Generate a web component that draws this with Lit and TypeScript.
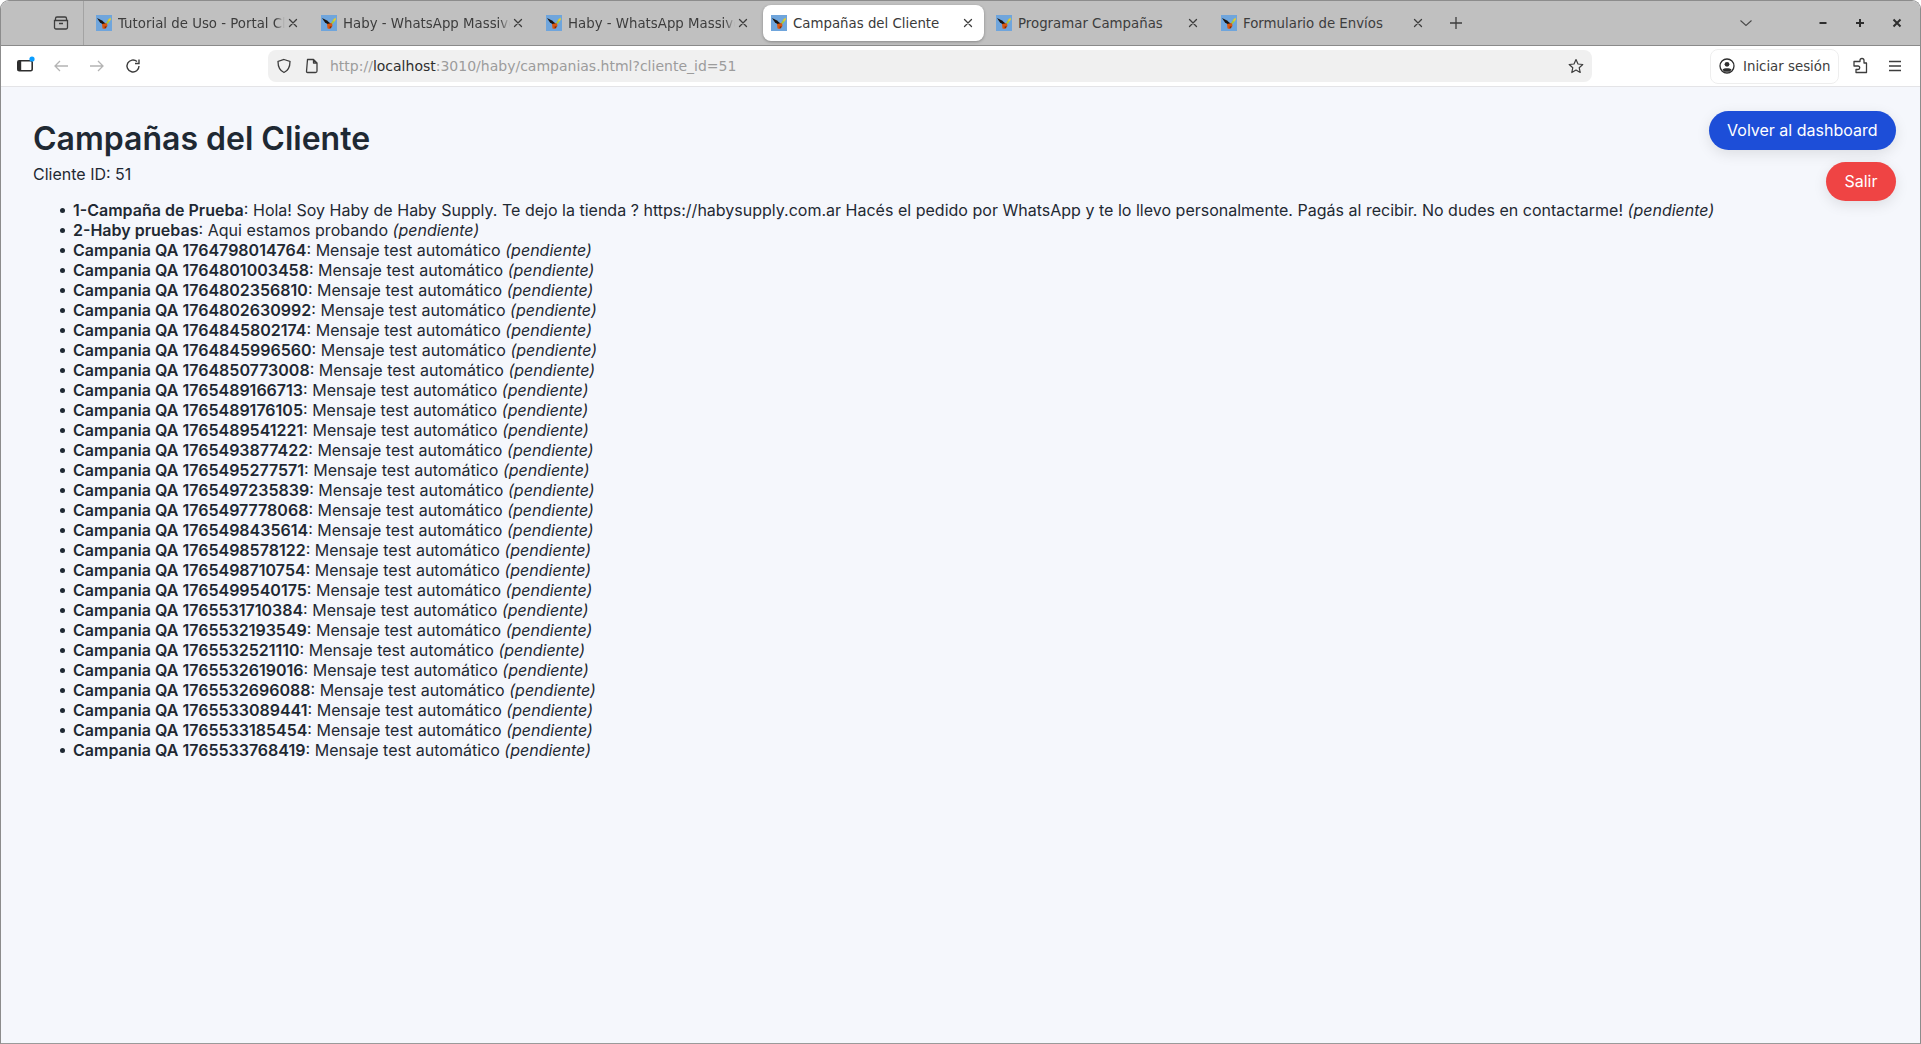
import { LitElement, html, css, svg } from "lit";
import { customElement } from "lit/decorators.js";

const QA = [
  "1764798014764","1764801003458","1764802356810","1764802630992","1764845802174","1764845996560","1764850773008",
  "1765489166713","1765489176105","1765489541221","1765493877422","1765495277571","1765497235839","1765497778068",
  "1765498435614","1765498578122","1765498710754","1765499540175","1765531710384","1765532193549","1765532521110",
  "1765532619016","1765532696088","1765533089441","1765533185454","1765533768419",
];
const ITEMS = [
  { n: "1-Campaña de Prueba", m: "Hola! Soy Haby de Haby Supply. Te dejo la tienda ? https://habysupply.com.ar Hacés el pedido por WhatsApp y te lo llevo personalmente. Pagás al recibir. No dudes en contactarme!" },
  { n: "2-Haby pruebas", m: "Aqui estamos probando" },
  ...QA.map((q) => ({ n: "Campania QA " + q, m: "Mensaje test automático" })),
];
const TABS = [
  { t: "Tutorial de Uso - Portal Cliente", fade: true },
  { t: "Haby - WhatsApp Massive", fade: true },
  { t: "Haby - WhatsApp Massive", fade: true },
  { t: "Campañas del Cliente", active: true },
  { t: "Programar Campañas" },
  { t: "Formulario de Envíos" },
];

const favicon = html`<svg class="fav" viewBox="0 0 16 16" width="16" height="16">
  <rect width="16" height="16" fill="#6fa5dc"/>
  <path d="M1 3 L6 5.5 L10 9 L8 10 L4 7.5Z" fill="#1b1410"/>
  <path d="M6 9 L11 8 L11.5 11 L9 14 L6.5 13.5Z" fill="#d9570f"/>
  <path d="M8 12 L10.5 11 L10 13.5Z" fill="#7a2b08"/>
  <path d="M10 8 L13 3.5 L14 5 L12 9Z" fill="#a8c63a"/>
  <path d="M12 5 L14.5 2.5 L15 4.5 L13 7Z" fill="#e2c93a"/>
</svg>`;
const ic = (w: number, body: unknown) => html`<svg class="ic" viewBox="0 0 16 16" width=${w} height=${w}>${body}</svg>`;
const closeX = ic(16, svg`<path d="M4.5 4.5 L11.5 11.5 M11.5 4.5 L4.5 11.5" stroke="#3d3d3d" stroke-width="1.3" stroke-linecap="round"/>`);

@customElement("app-root")
export class AppRoot extends LitElement {
  static styles = css`
    :host { display: flex; flex-direction: column; height: 100vh; box-sizing: border-box; background: #f5f7fc;
      border: 1px solid #8c8c8c; border-bottom-color: #9a9a9a; border-radius: 9px 9px 0 0; overflow: hidden; }
    .ic { display: block; flex: none; fill: none; overflow: visible; }
    .tabbar { display: flex; align-items: stretch; height: 44px; background: #c0c0c0; border-bottom: 1px solid #8a8a8a; flex: none;
      font: 13.33px "DejaVu Sans", sans-serif; color: #3d3d3d; }
    .view { width: 83px; box-sizing: border-box; flex: none; display: flex; align-items: center; justify-content: flex-end; padding: 0 14px 0 0; border-right: 1px solid #a3a3a3; margin-right: 4px; }
    .tabs { display: flex; gap: 4px; padding-top: 4px; padding-bottom: 4px; }
    .tab { width: 221px; box-sizing: border-box; display: flex; align-items: center; padding: 0 8px; border-radius: 8px; }
    .tab.active { background: #fff; box-shadow: 0 1px 3px rgba(0,0,0,.3); color: #3a3a3a; }
    .fav { display: block; flex: none; margin-right: 6px; }
    .title { flex: 1; min-width: 0; overflow: hidden; white-space: nowrap; }
    .title.fade { -webkit-mask-image: linear-gradient(to right, #000 calc(100% - 10px), transparent 100%); mask-image: linear-gradient(to right, #000 calc(100% - 10px), transparent 100%); }
    .plus { display: flex; margin-left: 4px; align-self: center; padding: 0 10px; }
    .spacer { flex: 1; }
    .winbtns { display: flex; align-items: center; gap: 21px; padding-right: 15px; }
    .chev { margin-right: 40px; }
    .toolbar { display: flex; align-items: center; height: 40px; background: #fff; border-bottom: 1px solid #e4e4e7; flex: none;
      font: 13.33px "DejaVu Sans", sans-serif; color: #3d3d3d; padding-left: 16px; }
    .navs { display: flex; gap: 20px; align-items: center; width: 251px; flex: none; }
    .url { width: 1324px; height: 32px; box-sizing: border-box; background: #f0f0f0; border-radius: 8px; display: flex; align-items: center; padding: 0 8px 0 8px; margin-right: 119px; flex: none; font-size: 14px; }
    .urltext { flex: 1; color: #9c9c9c; margin-left: 10px; white-space: nowrap; }
    .urltext b { font-weight: 400; color: #2e2e2e; }
    .url .page { margin-left: 12px; }
    .sign { width: 129px; height: 35px; box-sizing: border-box; margin-left: -1px; border: 1px solid #eeeeee; border-radius: 8px; display: flex; align-items: center; gap: 8px; padding-left: 8px; flex: none; white-space: nowrap; }
    .ext { margin-left: 13px; }
    .menu { margin-left: 19px; }
    .page-body { flex: 1; min-height: 0; padding: 24px 24px 0 32px; font-family: Inter, sans-serif; font-size: 16px; color: #1f2933; }
    .head { display: flex; justify-content: space-between; align-items: flex-start; }
    h1 { margin: 8px 0 0; font-size: 32px; line-height: 39px; font-weight: 600; color: #1f2933; }
    .cid { margin: 7px 0 0; line-height: 19px; }
    .actions { display: flex; flex-direction: column; align-items: flex-end; gap: 12px; }
    button { height: 39px; border: 0; border-radius: 20px; color: #fff; font: 16px Inter, sans-serif; padding: 0 18.5px 2px; box-shadow: 0 4px 14px rgba(0,0,0,.1); }
    .blue { background: #1d4ed8; }
    .red { background: #ef4444; }
    ul { margin: -1px 0 0; padding: 0 0 0 40px; line-height: 20px; list-style: none; word-spacing: 0.07px; }
    li::before { content: ""; display: inline-block; width: 5px; height: 5px; border-radius: 50%; background: currentColor; margin: 0 8.5px 0 -13.5px; vertical-align: 3px; }
    li b { font-weight: 600; }
  `;
  render() {
    return html`
      <div class="tabbar">
        <div class="view">${ic(16, svg`<path d="M2.5 5.5 V3.5 a1.5 1.5 0 0 1 1.5-1.5 h8 a1.5 1.5 0 0 1 1.5 1.5 V5.5 M1.5 5.5 h13 v7 a1.5 1.5 0 0 1 -1.5 1.5 h-10 a1.5 1.5 0 0 1 -1.5-1.5Z M6 8.5 h4" stroke="#3d3d3d" stroke-width="1.3"/>`)}</div>
        <div class="tabs">
          ${TABS.map((t) => html`<div class="tab ${t.active ? "active" : ""}">${favicon}<span class="title ${t.fade ? "fade" : ""}">${t.t}</span>${closeX}</div>`)}
        </div>
        <div class="plus">${ic(16, svg`<path d="M8 2 V14 M2 8 H14" stroke="#3d3d3d" stroke-width="1.3"/>`)}</div>
        <div class="spacer"></div>
        <div class="winbtns">
          <span class="chev">${ic(16, svg`<path d="M2.5 5.5 L8 10.5 L13.5 5.5" stroke="#4a4a4a" stroke-width="1.1"/>`)}</span>
          ${ic(16, svg`<path d="M4.5 8 H11.5" stroke="#2e2e2e" stroke-width="2"/>`)}
          ${ic(16, svg`<path d="M4 8 H12 M8 4 V12" stroke="#2e2e2e" stroke-width="2"/>`)}
          ${ic(16, svg`<path d="M4.5 4.5 L11.5 11.5 M11.5 4.5 L4.5 11.5" stroke="#2e2e2e" stroke-width="2"/>`)}
        </div>
      </div>
      <div class="toolbar">
        <div class="navs">
          ${ic(16, svg`<rect x="0.8" y="2.8" width="14.4" height="10" rx="1.5" stroke="#2e2e2e" stroke-width="1.6"/><rect x="0.8" y="2.8" width="3.4" height="10" fill="#2e2e2e"/><circle cx="15" cy="1" r="2.6" fill="#0a9dff"/>`)}
          ${ic(16, svg`<path d="M15 8 H2 M7 3 L2 8 L7 13" stroke="#b4b4b4" stroke-width="1.3"/>`)}
          ${ic(16, svg`<path d="M1 8 H14 M9 3 L14 8 L9 13" stroke="#b4b4b4" stroke-width="1.3"/>`)}
          ${ic(16, svg`<path d="M14 8 A6 6 0 1 1 12 3.5 M14 1.5 V5.5 H10" stroke="#3d3d3d" stroke-width="1.4"/>`)}
        </div>
        <div class="url">
          ${ic(16, svg`<path d="M8 1.5 L14 3.5 C14 9 12.5 12.5 8 14.5 C3.5 12.5 2 9 2 3.5Z" stroke="#3d3d3d" stroke-width="1.3"/>`)}
          <span class="page">${ic(16, svg`<path d="M3.5 1.5 H9.5 L13 5 V13 a1.5 1.5 0 0 1 -1.5 1.5 h-8 a1 1 0 0 1 -1-1 Z M9.5 1.5 V5 H13" stroke="#3d3d3d" stroke-width="1.3" stroke-linejoin="round"/>`)}</span>
          <span class="urltext">http://<b>localhost</b>:3010/haby/campanias.html?cliente_id=51</span>
          ${ic(16, svg`<path d="M8 1.5 L10 6 L14.8 6.5 L11.2 9.7 L12.2 14.5 L8 12 L3.8 14.5 L4.8 9.7 L1.2 6.5 L6 6Z" stroke="#3d3d3d" stroke-width="1.2" stroke-linejoin="round"/>`)}
        </div>
        <div class="sign">
          ${ic(16, svg`<circle cx="8" cy="8" r="7" stroke="#2e2e2e" stroke-width="1.3"/><circle cx="8" cy="6.3" r="2.4" fill="#2e2e2e"/><path d="M3.5 11.5 C5 9.8 11 9.8 12.5 11.5 L11 13.8 H5Z" fill="#2e2e2e"/>`)}
          <span>Iniciar sesión</span>
        </div>
        <span class="ext">${ic(16, svg`<path d="M6 3.5 H8 V2.5 a2 2 0 0 1 4 0 V5 H14.5 V14.5 H4 V11.5 H6 a1.7 1.7 0 0 0 0-3.5 H2 V3.5Z" stroke="#3d3d3d" stroke-width="1.3" stroke-linejoin="round"/>`)}</span>
        <span class="menu">${ic(16, svg`<path d="M2 3.5 H14 M2 8 H14 M2 12.5 H14" stroke="#3d3d3d" stroke-width="1.3"/>`)}</span>
      </div>
      <main class="page-body">
        <div class="head">
          <div>
            <h1>Campañas del Cliente</h1>
            <p class="cid">Cliente ID: 51</p>
          </div>
          <div class="actions">
            <button class="blue">Volver al dashboard</button>
            <button class="red">Salir</button>
          </div>
        </div>
        <ul>
          ${ITEMS.map((i) => html`<li><b>${i.n}</b>: ${i.m} <em>(pendiente)</em></li>`)}
        </ul>
      </main>
    `;
  }
}
